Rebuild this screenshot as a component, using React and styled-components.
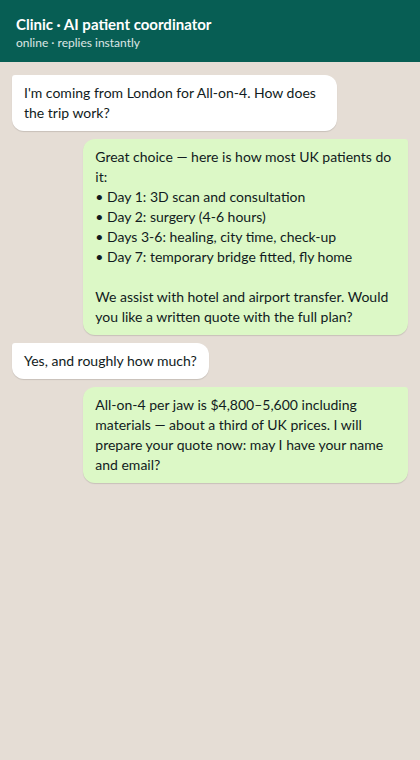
import React from 'react';
import styled, { createGlobalStyle } from 'styled-components';

const messages = [
  {
    from: 'patient',
    text: "I'm coming from London for All-on-4. How does the trip work?",
  },
  {
    from: 'bot',
    text: `Great choice — here is how most UK patients do it:
• Day 1: 3D scan and consultation
• Day 2: surgery (4-6 hours)
• Days 3-6: healing, city time, check-up
• Day 7: temporary bridge fitted, fly home

We assist with hotel and airport transfer. Would you like a written quote with the full plan?`,
  },
  {
    from: 'patient',
    text: 'Yes, and roughly how much?',
  },
  {
    from: 'bot',
    text: 'All-on-4 per jaw is $4,800–5,600 including materials — about a third of UK prices. I will prepare your quote now: may I have your name and email?',
  },
];

const GlobalStyle = createGlobalStyle`
  html, body {
    margin: 0;
    padding: 0;
    background: #e5ddd5;
  }

  body {
    font-family: Lato, "Open Sans", sans-serif;
    color: #111b21;
  }
`;

const App = () => {
  return (
    <>
      <GlobalStyle />
      <Page>
        <Header>
          <Title>Clinic · AI patient coordinator</Title>
          <Status>online · replies instantly</Status>
        </Header>
        <Thread>
          {messages.map((msg, i) => (
            <Bubble key={i} $outgoing={msg.from === 'bot'}>
              {msg.text}
            </Bubble>
          ))}
        </Thread>
      </Page>
    </>
  );
};

const Page = styled.div`
  min-height: 760px;
  display: flex;
  flex-direction: column;
  background: #e5ddd5;
`;

const Header = styled.header`
  background: #075e54;
  color: #ffffff;
  padding: 14px 16px 11px;
  display: flex;
  flex-direction: column;
  gap: 1px;
`;

const Title = styled.h1`
  margin: 0;
  font-size: 15px;
  font-weight: 700;
  line-height: 20px;
`;

const Status = styled.div`
  font-size: 12px;
  line-height: 16px;
  opacity: 0.85;
`;

const Thread = styled.main`
  display: flex;
  flex-direction: column;
  gap: 8px;
  padding: 13px 12px;
`;

const Bubble = styled.div`
  align-self: ${(p) => (p.$outgoing ? 'flex-end' : 'flex-start')};
  max-width: 82%;
  box-sizing: border-box;
  padding: 8px 12px;
  font-size: 14px;
  line-height: 20px;
  white-space: pre-wrap;
  background: ${(p) => (p.$outgoing ? '#dcf8c6' : '#ffffff')};
  border-radius: ${(p) => (p.$outgoing ? '12px 3px 12px 12px' : '3px 12px 12px 12px')};
  box-shadow: 0 1px 1px rgba(0, 0, 0, 0.13);
`;

export default App;
